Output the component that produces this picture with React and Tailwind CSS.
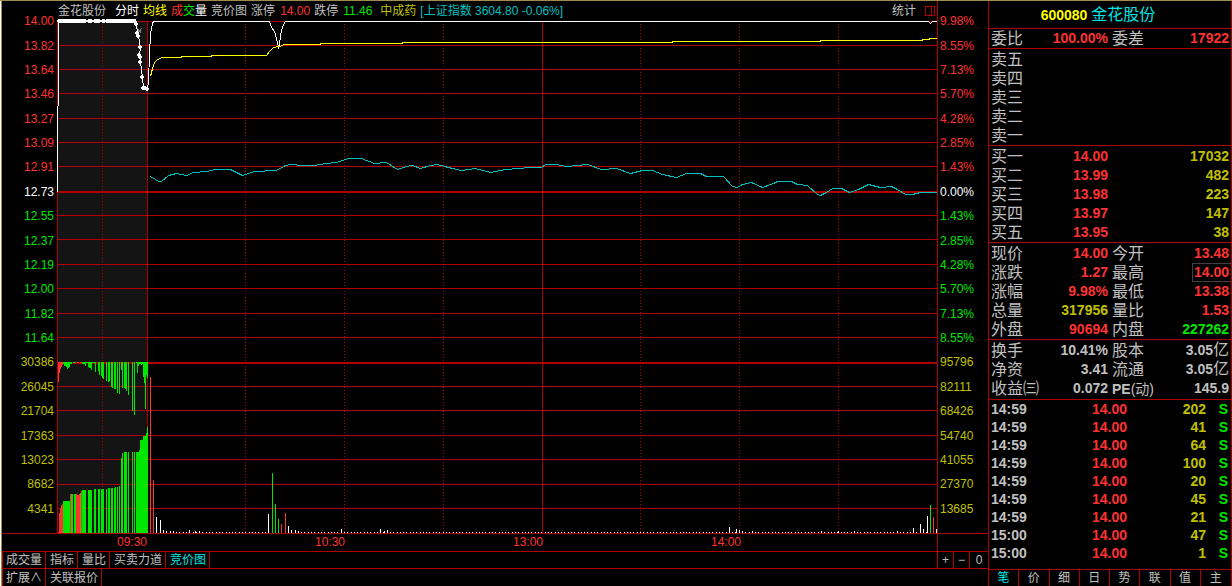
const PRICE_LABELS = [
  "14.00", "13.82", "13.64", "13.46", "13.27", "13.09", "12.91",
  "12.73",
  "12.55", "12.37", "12.19", "12.00", "11.82", "11.64",
];

const PERCENT_LABELS = [
  "9.98%", "8.55%", "7.13%", "5.70%", "4.28%", "2.85%", "1.43%",
  "0.00%",
  "1.43%", "2.85%", "4.28%", "5.70%", "7.13%", "8.55%",
];

const LEFT_VOLUMES = ["30386", "26045", "21704", "17363", "13023", "8682", "4341"];
const RIGHT_VOLUMES = ["95796", "82111", "68426", "54740", "41055", "27370", "13685"];

const TIMES = ["09:30", "10:30", "13:00", "14:00"];

const SELLS = ["卖五", "卖四", "卖三", "卖二", "卖一"];

const BUYS = [
  ["买一", "14.00", "17032"],
  ["买二", "13.99", "482"],
  ["买三", "13.98", "223"],
  ["买四", "13.97", "147"],
  ["买五", "13.95", "38"],
];

const TICKS = [
  ["14:59", "14.00", "202"],
  ["14:59", "14.00", "41"],
  ["14:59", "14.00", "64"],
  ["14:59", "14.00", "100"],
  ["14:59", "14.00", "20"],
  ["14:59", "14.00", "45"],
  ["14:59", "14.00", "21"],
  ["15:00", "14.00", "47"],
  ["15:00", "14.00", "1"],
];

const TABS = ["笔", "价", "细", "日", "势", "联", "值", "主"];

const RED = "#b00000";
const UP = "#ff3232";
const DOWN = "#00e600";
const WHITE = "#ffffff";

const GRID_Y = [45, 69, 93, 118, 142, 166, 215, 239, 264, 288, 313, 337, 386, 410, 435, 459, 484, 508];
const DOTTED_X = [102, 245, 344, 443, 640, 739, 838];

const PRICE_LINE =
  "147,89 148,80 149,55 150,33 151,28 152,23 153,21 269,21 271,27 274,31 276,38 278,47 279,45 280,34 282,27 284,22 285,21 928,21 930,23 932,21 937,21";

const AVERAGE_LINE =
  "150,76 152,68 154,62 157,59 162,57 181,57 181,56 211,56 211,55 266,55 269,51 273,47 279,46 284,44 320,44 320,43 402,43 402,42 672,42 672,41 820,41 820,40 922,40 922,39 929,39 929,38 937,38";

const INDEX_LINE =
  "150,176 155,179 158,181 161,181 168,175 176,173 186,175 193,172 207,171 214,169 230,169 242,175 254,171 276,170 285,165 290,164 303,165 313,165 326,163 336,162 342,160 348,158 361,158 374,163 386,162 397,169 406,166 412,165 420,168 430,165 437,164 444,166 452,168 461,170 475,168 490,172 505,169 530,167 541,167 545,164 556,164 566,166 587,164 601,169 616,168 630,173 642,170 652,170 662,174 676,177 686,173 700,173 706,176 723,176 732,186 737,187 742,184 751,182 762,187 773,183 777,181 791,181 797,184 807,185 817,194 820,195 826,192 832,188 841,188 849,192 858,189 868,184 880,187 891,186 897,189 905,194 912,194 920,192 937,192";

const AUCTION_POINTS = [
  [135, 22], [136, 24], [137, 33], [138, 36], [140, 47], [139, 55], [140, 57],
  [140, 62], [142, 77], [143, 88], [145, 88], [147, 89],
];

// unmatched auction volume, hanging from y = 362: x, width, bottom, colour
const HANGING_BARS = [
  [58, 1, 382, UP], [59, 1, 373, UP], [60, 1, 369, UP], [61, 1, 367, UP], [62, 1, 365, UP],
  [63, 1, 364, DOWN], [64, 2, 366, DOWN], [66, 1, 367, DOWN], [67, 1, 369, DOWN], [68, 1, 368, DOWN],
  [69, 1, 367, DOWN], [70, 2, 364, DOWN], [73, 3, 363, DOWN], [77, 2, 363, UP], [80, 2, 363, UP],
  [82, 3, 364, DOWN], [85, 1, 366, DOWN], [86, 2, 363, DOWN], [88, 1, 367, DOWN], [89, 2, 368, DOWN],
  [91, 1, 370, DOWN], [92, 3, 363, DOWN], [95, 1, 372, DOWN], [98, 1, 371, DOWN], [99, 1, 375, DOWN],
  [101, 1, 376, DOWN], [102, 1, 378, DOWN], [103, 1, 379, DOWN], [106, 1, 381, DOWN], [108, 1, 382, DOWN],
  [109, 1, 381, DOWN], [111, 1, 387, DOWN], [112, 1, 388, DOWN], [114, 2, 389, DOWN], [117, 1, 393, DOWN],
  [119, 1, 394, DOWN], [121, 1, 370, DOWN], [122, 1, 388, DOWN], [124, 1, 388, DOWN], [125, 1, 389, DOWN],
  [126, 1, 391, DOWN], [128, 1, 395, DOWN], [132, 1, 411, DOWN], [134, 1, 415, DOWN], [136, 1, 363, DOWN],
  [137, 1, 373, DOWN], [138, 1, 366, DOWN], [139, 2, 364, DOWN], [141, 1, 365, DOWN], [142, 1, 364, DOWN],
  [143, 1, 377, DOWN], [144, 1, 383, DOWN], [145, 1, 409, DOWN], [146, 1, 375, DOWN], [147, 1, 378, DOWN],
];

// standing bars: x, width, top, colour
const AUCTION_BARS = [
  [58, 1, 532, UP], [59, 1, 513, UP], [60, 1, 508, UP], [61, 1, 505, UP], [62, 1, 504, UP],
  [63, 7, 501, DOWN], [70, 1, 494, UP], [71, 2, 494, DOWN], [74, 2, 494, DOWN], [76, 1, 494, UP],
  [77, 2, 495, UP], [79, 1, 494, UP], [80, 1, 493, DOWN], [81, 1, 491, UP], [82, 4, 490, DOWN],
  [88, 4, 490, DOWN], [94, 2, 489, DOWN], [98, 2, 489, DOWN], [101, 3, 489, DOWN], [106, 1, 489, DOWN],
  [108, 2, 488, DOWN], [111, 2, 488, DOWN], [114, 1, 488, DOWN], [115, 1, 487, DOWN], [117, 1, 487, DOWN],
  [119, 1, 486, DOWN], [121, 1, 458, DOWN], [122, 1, 453, DOWN], [124, 3, 452, DOWN], [128, 1, 452, DOWN],
  [132, 1, 452, DOWN], [134, 1, 452, DOWN], [136, 3, 452, DOWN], [139, 1, 450, DOWN], [140, 3, 440, DOWN],
  [143, 3, 436, DOWN], [146, 1, 433, DOWN], [147, 1, 427, DOWN],
];

const SESSION_BARS = [
  [150, 377, UP], [153, 480, UP], [156, 517, WHITE], [160, 520, WHITE], [163, 530, WHITE],
  [166, 531, WHITE], [170, 531, WHITE], [173, 531, WHITE], [189, 530, WHITE], [195, 531, WHITE],
  [199, 531, WHITE], [268, 514, WHITE], [272, 473, DOWN], [275, 504, DOWN], [278, 519, DOWN],
  [281, 524, UP], [285, 513, UP], [288, 526, WHITE], [291, 530, WHITE], [295, 530, WHITE],
  [298, 531, WHITE], [341, 529, WHITE], [380, 529, WHITE], [384, 531, WHITE], [387, 530, WHITE],
  [729, 527, WHITE], [736, 529, WHITE], [739, 530, WHITE], [742, 531, WHITE], [752, 531, WHITE],
  [821, 531, WHITE], [838, 531, WHITE], [854, 531, WHITE], [897, 531, WHITE], [913, 528, WHITE],
  [920, 524, WHITE], [923, 529, WHITE], [927, 516, WHITE], [930, 505, DOWN], [933, 517, UP],
  [936, 529, WHITE],
];

const QUIET_MINUTES = Array.from({ length: 235 }, (_, i) => 163 + Math.round(i * 3.29));

function Chart() {
  return (
    <svg
      viewBox="57 21 880 512"
      preserveAspectRatio="none"
      shapeRendering="crispEdges"
      className="block h-[512px] w-full overflow-visible"
    >
      <rect x="58" y="21" width="89" height="512" fill="#141414" />

      {DOTTED_X.map((x) => (
        <line key={x} x1={x + 0.5} x2={x + 0.5} y1="24" y2="533" stroke={RED} strokeDasharray="1 2" />
      ))}
      {[21, ...GRID_Y].map((y) => (
        <rect key={y} x="57" y={y} width="880" height="1" fill={RED} />
      ))}
      <rect x="57" y="191" width="880" height="2" fill={RED} />
      <rect x="57" y="362" width="880" height="2" fill={RED} />
      {[57, 147, 542].map((x) => (
        <rect key={x} x={x} y="21" width="1" height="512" fill={RED} />
      ))}

      {HANGING_BARS.map(([x, w, bottom, fill]) => (
        <rect key={x} x={x} y="362" width={w} height={bottom - 362} fill={fill} />
      ))}
      {AUCTION_BARS.map(([x, w, top, fill]) => (
        <rect key={x} x={x} y={top} width={w} height={533 - top} fill={fill} />
      ))}
      {QUIET_MINUTES.filter((x) => x < 937).map((x) => (
        <rect key={x} x={x} y="532" width="1" height="1" fill={WHITE} />
      ))}
      {SESSION_BARS.map(([x, top, fill]) => (
        <rect key={x} x={x} y={top} width="1" height={533 - top} fill={fill} />
      ))}

      <g transform="translate(0.5 0.5)" fill="none">
        <polyline points={INDEX_LINE} stroke="#00c0c0" />
        <polyline points={PRICE_LINE} stroke={WHITE} />
        <polyline points={AVERAGE_LINE} stroke="#ffff00" />
        <path d="M137 28l4 5M141 28l-4 5" stroke="#808080" />
        <polyline points={AUCTION_POINTS.map((p) => p.join(",")).join(" ")} stroke={WHITE} />
      </g>

      <rect x="57" y="106" width="1" height="86" fill={WHITE} />
      <rect x="58" y="21" width="1" height="85" fill={WHITE} />
      <rect x="57" y="20" width="78" height="2" fill={WHITE} />
      {[[58, 28], [88, 4], [94, 6], [102, 3], [106, 30]].map(([x, w]) => (
        <rect key={x} x={x} y="19" width={w} height="4" fill={WHITE} />
      ))}
      {AUCTION_POINTS.map(([x, y]) => (
        <path key={`${x}-${y}`} d={`M${x - 1} ${y - 2}h2v1h1v2h-1v1h-2v-1h-1v-2h1z`} fill={WHITE} />
      ))}
    </svg>
  );
}

function axisColor(index) {
  if (index < 7) return "text-[#ff3232]";
  if (index === 7) return "text-white";
  return "text-[#00e600]";
}

function AxisLabels({ labels, volumes }) {
  return (
    <div className="flex h-[512px] flex-col">
      {labels.map((label, i) => (
        <div key={i} className={`flex flex-1 items-center ${axisColor(i)}`}>
          <span className="w-full">{label}</span>
        </div>
      ))}
      {volumes.map((label) => (
        <div key={label} className="flex flex-1 items-center text-[#c0c000]">
          <span className="w-full">{label}</span>
        </div>
      ))}
    </div>
  );
}

function ChartHeader() {
  return (
    <div className="flex h-5 items-center gap-1 whitespace-nowrap pl-px leading-5">
      <span className="mr-[5px]">金花股份</span>
      <span className="text-white">分时</span>
      <span className="text-[#ffff00]">均线</span>
      <span>
        <span className="text-[#ff3232]">成</span>
        <span className="text-[#00e600]">交</span>
        <span className="text-white">量</span>
      </span>
      <span>竞价图</span>
      <span>涨停</span>
      <span className="ml-px text-[#ff3232]">14.00</span>
      <span>跌停</span>
      <span className="ml-px mr-1 text-[#00e600]">11.46</span>
      <span className="text-[#c0c000]">中成药</span>
      <span className="text-[#00c0c0]">[上证指数 3604.80 -0.06%]</span>
      <button type="button" className="ml-auto mr-[5px]">统计</button>
      <button type="button" aria-label="侧栏" className="mr-[2px]">
        <svg viewBox="0 0 10 10" shapeRendering="crispEdges" className="block size-[10px]">
          <path d="M.5 .5h9v9h-9zM6.5 .5v9" fill="none" stroke={RED} />
        </svg>
      </button>
    </div>
  );
}

function ToolButton({ children, active }) {
  return (
    <button
      type="button"
      className={`border-r border-[#b00000] pl-1 pr-[3px] first:pl-[3px] ${active ? "text-[#00e6e6]" : ""}`}
    >
      {children}
    </button>
  );
}

function QuoteTable({ rows }) {
  return (
    <table className="w-full table-fixed border-collapse">
      <colgroup>
        <col className="w-[50px]" />
        <col className="w-[69px]" />
        <col className="w-[50px]" />
        <col />
      </colgroup>
      <tbody>
        {rows.map(([label, value, color, label2, value2, color2, boxed]) => (
          <tr key={label} className="h-[19px]">
            <th className="whitespace-nowrap p-0 pl-[2px] text-left text-base/[19px] font-normal">{label}</th>
            <td className={`p-0 text-right text-sm/[19px] font-bold ${color}`}>{value}</td>
            <th className="whitespace-nowrap p-0 pl-1 text-left text-base/[19px] font-normal">{label2}</th>
            <td className={`whitespace-nowrap p-0 text-right text-sm/[19px] font-bold ${color2}`}>
              {boxed ? (
                <span className="ml-auto block h-[19px] w-fit border border-r-0 border-[#404040] pl-px pr-[2px] leading-[17px]">
                  {value2}
                </span>
              ) : (
                <span className="block pr-[2px]">{value2}</span>
              )}
            </td>
          </tr>
        ))}
      </tbody>
    </table>
  );
}

function Yi() {
  return <span className="text-base/[1] font-normal">亿</span>;
}

const UP_TEXT = "text-[#ff3232]";
const DOWN_TEXT = "text-[#00e600]";
const VOLUME_TEXT = "text-[#c0c000]";
const PLAIN_TEXT = "text-[#c0c0c0]";

function QuotePanel() {
  return (
    <aside className="flex w-[244px] shrink-0 flex-col border-x border-[#b00000]">
      <h1 className="flex h-7 items-center justify-center gap-1 border-b border-[#b00000] pr-6">
        <span className="text-sm font-bold text-[#ffff00]">600080</span>
        <span className="text-base text-[#00e6e6]">金花股份</span>
      </h1>

      <div className="border-b border-[#b00000]">
        <QuoteTable rows={[["委比", "100.00%", UP_TEXT, "委差", "17922", UP_TEXT]]} />
      </div>

      <div className="border-b border-[#b00000] pt-px">
        <table className="w-full border-collapse">
          <tbody>
            {SELLS.map((label) => (
              <tr key={label} className="h-[19px]">
                <th className="p-0 pl-[2px] text-left text-base/[19px] font-normal">{label}</th>
                <td />
                <td />
              </tr>
            ))}
          </tbody>
        </table>
      </div>

      <div className="border-b border-[#b00000] pt-px">
        <table className="w-full table-fixed border-collapse">
          <colgroup>
            <col className="w-[50px]" />
            <col className="w-[69px]" />
            <col />
          </colgroup>
          <tbody>
            {BUYS.map(([label, price, volume]) => (
              <tr key={label} className="h-[19px]">
                <th className="p-0 pl-[2px] text-left text-base/[19px] font-normal">{label}</th>
                <td className="p-0 text-right text-sm/[19px] font-bold text-[#ff3232]">{price}</td>
                <td className="p-0 pr-[2px] text-right text-sm/[19px] font-bold text-[#c0c000]">{volume}</td>
              </tr>
            ))}
          </tbody>
        </table>
      </div>

      <div className="border-b border-[#b00000] pt-px">
        <QuoteTable
          rows={[
            ["现价", "14.00", UP_TEXT, "今开", "13.48", UP_TEXT],
            ["涨跌", "1.27", UP_TEXT, "最高", "14.00", UP_TEXT, true],
            ["涨幅", "9.98%", UP_TEXT, "最低", "13.38", UP_TEXT],
            ["总量", "317956", VOLUME_TEXT, "量比", "1.53", UP_TEXT],
            ["外盘", "90694", UP_TEXT, "内盘", "227262", DOWN_TEXT],
          ]}
        />
      </div>

      <div className="border-b border-[#b00000] py-px">
        <QuoteTable
          rows={[
            ["换手", "10.41%", PLAIN_TEXT, "股本", <>3.05<Yi /></>, PLAIN_TEXT],
            ["净资", "3.41", PLAIN_TEXT, "流通", <>3.05<Yi /></>, PLAIN_TEXT],
            [
              "收益㈢",
              "0.072",
              PLAIN_TEXT,
              <span key="pe" className="text-sm/[1]"><b>PE</b>(动)</span>,
              "145.9",
              PLAIN_TEXT,
            ],
          ]}
        />
      </div>

      <div className="flex-1">
        <table className="w-full table-fixed border-collapse text-sm/[18px] font-bold">
          <colgroup>
            <col className="w-[60px]" />
            <col className="w-[78px]" />
            <col className="w-[79px]" />
            <col />
          </colgroup>
          <tbody>
            {TICKS.map(([time, price, volume], i) => (
              <tr key={i} className="h-[18px]">
                <td className="p-0 pl-[2px]">{time}</td>
                <td className="p-0 text-right text-[#ff3232]">{price}</td>
                <td className="p-0 text-right text-[#c0c000]">{volume}</td>
                <td className="p-0 pr-[3px] text-right text-[#00e600]">S</td>
              </tr>
            ))}
          </tbody>
        </table>
      </div>

      <nav className="grid h-[17px] grid-cols-8 border-t border-[#b00000] leading-4">
        {TABS.map((tab, i) => (
          <button
            key={tab}
            type="button"
            className={`border-r border-[#b00000] last:border-r-0 ${i === 0 ? "text-[#00e6e6]" : ""}`}
          >
            {tab}
          </button>
        ))}
      </nav>
    </aside>
  );
}

export default function App() {
  return (
    <div className="flex min-h-screen border-t border-[#a08c50] bg-black font-['Liberation_Sans','Noto_Sans_CJK_SC',sans-serif] text-xs text-[#c0c0c0]">
      <div className="w-[2px] shrink-0 border-r border-[#a08c50] bg-white" />

      <main className="flex min-w-0 flex-1 flex-col">
        <div className="flex">
          <div className="w-[55px] shrink-0 pr-[3px] pt-2 text-right">
            <AxisLabels labels={PRICE_LABELS} volumes={LEFT_VOLUMES} />
          </div>
          <div className="min-w-0 flex-1">
            <ChartHeader />
            <Chart />
          </div>
          <div className="w-[51px] shrink-0 border-l border-[#b00000] pl-[2px] pt-2">
            <AxisLabels labels={PERCENT_LABELS} volumes={RIGHT_VOLUMES} />
          </div>
        </div>

        <div className="flex h-[18px] border-t border-[#b00000] leading-[17px] text-[#ff3232]">
          <div className="flex flex-1 pl-[115px] pr-7">
            {TIMES.map((time) => (
              <span key={time} className="flex-1">{time}</span>
            ))}
          </div>
          <div className="w-[51px] border-l border-[#b00000]" />
        </div>

        <div className="flex h-[18px] border-y border-[#b00000] leading-4">
          <div className="flex flex-1 border-l border-[#b00000]">
            <ToolButton>成交量</ToolButton>
            <ToolButton>指标</ToolButton>
            <ToolButton>量比</ToolButton>
            <ToolButton>买卖力道</ToolButton>
            <ToolButton active>竞价图</ToolButton>
          </div>
          <div className="flex w-[51px] border-l border-[#b00000]">
            <button type="button" className="w-4 border-r border-[#b00000]">+</button>
            <button type="button" className="w-4 border-r border-[#b00000]">−</button>
            <button type="button" className="flex-1">0</button>
          </div>
        </div>

        <div className="flex h-[17px] border-l border-[#b00000] leading-4">
          <ToolButton>扩展∧</ToolButton>
          <ToolButton>关联报价</ToolButton>
        </div>
      </main>

      <QuotePanel />
    </div>
  );
}
